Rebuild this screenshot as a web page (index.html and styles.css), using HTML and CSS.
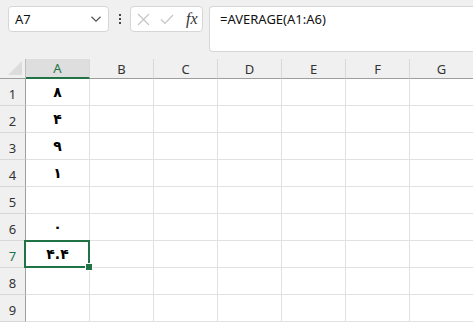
FILE: index.html
```html
<!DOCTYPE html>
<html lang="en">
<head>
  <meta charset="UTF-8">
  <title>Sheet</title>
  <link rel="stylesheet" href="styles.css">
</head>
<body>
  <div class="toolbar">
    <div class="namebox">
      <span>A7</span>
      <svg class="chev" width="12" height="8" viewBox="0 0 12 8"><path d="M1.5 1.8 L6 6.2 L10.5 1.8" fill="none" stroke="#555" stroke-width="1.2"/></svg>
    </div>
    <div class="vdots"><i></i><i></i><i></i></div>
    <div class="fxbox">
      <svg width="13" height="13" viewBox="0 0 13 13"><path d="M1 1 L12 12 M12 1 L1 12" stroke="#c4c4c4" stroke-width="1.1" fill="none"/></svg>
      <svg width="14" height="11" viewBox="0 0 14 11"><path d="M1 5.5 L5 9.5 L13 1" stroke="#c4c4c4" stroke-width="1.1" fill="none"/></svg>
      <span class="fx">fx</span>
    </div>
    <div class="formula">=AVERAGE(A1:A6)</div>
  </div>

  <div class="grid header">
    <div class="corner"><svg width="14" height="14" viewBox="0 0 14 14"><path d="M14 0 L14 14 L0 14 Z" fill="#dcdcdc"/></svg></div>
    <div class="colhead active">A</div>
    <div class="colhead">B</div>
    <div class="colhead">C</div>
    <div class="colhead">D</div>
    <div class="colhead">E</div>
    <div class="colhead">F</div>
    <div class="colhead">G</div>
  </div>
  <div class="grid" id="rows"></div>

  <script>
    const values = ['٨', '۴', '٩', '١', '', '۰', '۴.۴', '', ''];
    const rows = document.getElementById('rows');
    values.forEach(function (v, i) {
      const head = document.createElement('div');
      head.className = 'rowhead' + (i === 6 ? ' active' : '');
      head.innerText = i + 1;
      rows.appendChild(head);
      for (let c = 0; c < 7; c++) {
        const cell = document.createElement('div');
        cell.className = 'cell';
        if (c === 0) {
          cell.innerText = v;
          if (i === 6) cell.className += ' selected';
        }
        rows.appendChild(cell);
      }
    });
  </script>
</body>
</html>
```

FILE: styles.css
```css
body {
  margin: 0;
  background: #f0f0f0;
  font-family: "Noto Sans", "DejaVu Sans", sans-serif;
  font-size: 13px;
  color: #222;
  overflow: hidden;
}
.toolbar {
  display: flex;
  align-items: flex-start;
  padding: 6px 0 0 8px;
  height: 53px;
}
.namebox {
  box-sizing: border-box;
  width: 101px;
  height: 26px;
  background: #fff;
  border: 1px solid #d6d6d6;
  border-radius: 4px;
  display: flex;
  align-items: center;
  justify-content: space-between;
  padding: 0 6px 0 6px;
  color: #111;
}
.vdots {
  width: 21px;
  height: 26px;
  display: flex;
  flex-direction: column;
  align-items: center;
  justify-content: center;
  gap: 2px;
}
.vdots i {
  width: 2px;
  height: 2px;
  background: #444;
}
.fxbox {
  box-sizing: border-box;
  width: 73px;
  height: 26px;
  background: #fff;
  border: 1px solid #d6d6d6;
  border-radius: 4px;
  display: flex;
  align-items: center;
  gap: 10px;
  padding-left: 6px;
}
.fx {
  font-family: "Liberation Serif", serif;
  font-style: italic;
  font-size: 16px;
  color: #333;
  margin-left: 2px;
}
.formula {
  box-sizing: border-box;
  flex: 1;
  margin-left: 6px;
  height: 46px;
  background: #fff;
  border: 1px solid #d6d6d6;
  border-right: none;
  border-radius: 4px 0 0 4px;
  padding: 3px 0 0 10px;
  color: #111;
}
.grid {
  display: grid;
  grid-template-columns: 26px repeat(7, 64px);
  grid-auto-rows: 27px;
}
.grid.header {
  grid-auto-rows: 20px;
}
.corner {
  box-sizing: border-box;
  border-right: 1px solid #bdbdbd;
  border-bottom: 1px solid #9e9e9e;
  display: flex;
  align-items: flex-end;
  justify-content: flex-end;
  padding: 0 3px 3px 0;
}
.colhead {
  box-sizing: border-box;
  border-right: 1px solid #d8d8d8;
  border-bottom: 1px solid #9e9e9e;
  display: flex;
  align-items: center;
  justify-content: center;
  color: #333;
}
.colhead.active {
  background: #dedede;
  color: #217346;
  border-bottom: 2px solid #217346;
}
.rowhead {
  box-sizing: border-box;
  border-right: 1px solid #9e9e9e;
  border-bottom: 1px solid #d8d8d8;
  display: flex;
  align-items: flex-end;
  justify-content: center;
  padding-bottom: 2px;
  color: #333;
}
.rowhead.active {
  color: #217346;
}
.cell {
  box-sizing: border-box;
  position: relative;
  background: #fff;
  border-right: 1px solid #e1e1e1;
  border-bottom: 1px solid #e1e1e1;
  display: flex;
  align-items: flex-end;
  justify-content: center;
  padding-bottom: 5px;
  font-family: "DejaVu Sans", sans-serif;
  font-weight: bold;
  font-size: 14px;
  color: #000;
}
.cell.selected::after {
  content: "";
  position: absolute;
  top: -1px;
  left: -2px;
  right: -1px;
  bottom: -1px;
  border: 2px solid #217346;
}
.cell.selected::before {
  content: "";
  position: absolute;
  right: -4px;
  bottom: -4px;
  width: 6px;
  height: 6px;
  background: #217346;
  border: 1px solid #fff;
  z-index: 1;
}
```
